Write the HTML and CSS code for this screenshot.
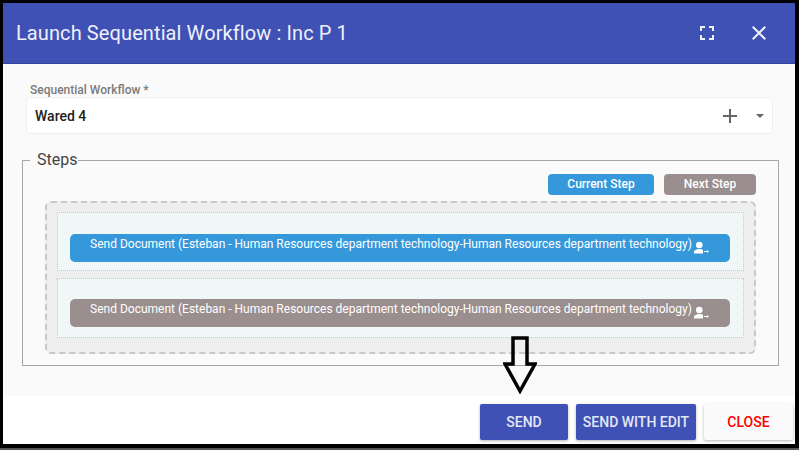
FILE: index.html
```html
<!DOCTYPE html>
<html lang="en">
<head>
    <meta charset="UTF-8">
    <meta name="viewport" content="width=device-width, initial-scale=1.0">
    <title>Launch Sequential Workflow</title>
    <link rel="stylesheet" href="styles.css">
</head>
<body>
    <div class="dialog">
        <header class="dialog-header">
            <h1>Launch Sequential Workflow : Inc P 1</h1>
            <div class="header-icons">
                <svg class="icon-expand" width="24" height="24" viewBox="0 0 24 24"><path d="M7 14H5v5h5v-2H7v-3zm-2-4h2V7h3V5H5v5zm12 7h-3v2h5v-5h-2v3zM14 5v2h3v3h2V5h-5z"/></svg>
                <svg class="icon-close" width="24" height="24" viewBox="0 0 24 24"><path d="M19 6.41 17.59 5 12 10.59 6.41 5 5 6.41 10.59 12 5 17.59 6.41 19 12 13.41 17.59 19 19 17.59 13.41 12z"/></svg>
            </div>
        </header>
        <div class="dialog-body">
            <label class="field-label">Sequential Workflow *</label>
            <div class="select-box">
                <span class="select-value">Wared 4</span>
                <svg class="icon-plus" width="24" height="24" viewBox="0 0 24 24"><path d="M19 13h-6v6h-2v-6H5v-2h6V5h2v6h6v2z"/></svg>
                <span class="select-caret"></span>
            </div>
            <fieldset class="steps">
                <legend>Steps</legend>
                <div class="legend-row">
                    <span class="tag tag-current">Current Step</span>
                    <span class="tag tag-next">Next Step</span>
                </div>
                <div class="step-list">
                    <div class="step-slot">
                        <div class="step-bar step-current">
                            <span>Send Document (Esteban - Human Resources department technology-Human Resources department technology)</span>
                            <svg class="icon-user" width="16" height="16" viewBox="0 0 16 16"><circle cx="5.3" cy="6" r="3.300"/><path d="M0 14.500V13c0-2 3-3 5.300-3 1.400 0 2.700.3 3.700.8v3.700z"/><path d="M10 12.100h3V11l2 1.500-2 1.500v-1.100h-3z"/></svg>
                        </div>
                    </div>
                    <div class="step-slot">
                        <div class="step-bar step-next">
                            <span>Send Document (Esteban - Human Resources department technology-Human Resources department technology)</span>
                            <svg class="icon-user" width="16" height="16" viewBox="0 0 16 16"><circle cx="5.3" cy="6" r="3.300"/><path d="M0 14.500V13c0-2 3-3 5.300-3 1.400 0 2.700.3 3.700.8v3.700z"/><path d="M10 12.100h3V11l2 1.500-2 1.500v-1.100h-3z"/></svg>
                        </div>
                    </div>
                </div>
            </fieldset>
        </div>
        <footer class="dialog-footer">
            <button class="btn btn-primary btn-send">SEND</button>
            <button class="btn btn-primary">SEND WITH EDIT</button>
            <button class="btn btn-close">CLOSE</button>
        </footer>
        <svg class="arrow-note" width="34" height="58" viewBox="0 0 34 58"><path d="M10 2h14v26h8L17 55 2 28h8z" fill="none" stroke="#000" stroke-width="3.500" stroke-linejoin="miter"/></svg>
    </div>
    <div class="taskbar"></div>
</body>
</html>
```

FILE: styles.css
```css
html, body {
    margin: 0;
    padding: 0;
}
body {
    width: 799px;
    height: 450px;
    overflow: hidden;
    background-color: #000;
    font-family: Roboto, "Liberation Sans", sans-serif;
}
.dialog {
    position: relative;
    display: flex;
    flex-direction: column;
    height: 441px;
    margin: 3px 4px 0 3px;
    background-color: #fff;
}
.dialog-header {
    display: flex;
    align-items: center;
    justify-content: space-between;
    flex: none;
    height: 60px;
    padding: 0 24px 0 13px;
    background-color: #3f51b5;
    border-bottom: 1px solid #36459c;
    color: #eef0fa;
}
.dialog-header h1 {
    margin: 0;
    font-size: 20px;
    font-weight: 400;
    letter-spacing: 0.1px;
}
.header-icons {
    display: flex;
    align-items: center;
    gap: 28px;
}
.header-icons svg {
    display: block;
    fill: #eef0fa;
}
.dialog-body {
    flex: none;
    height: 332px;
    box-sizing: border-box;
    margin-left: 2px;
    padding: 19px 17px 0 17px;
    background-color: #fafafa;
}
.field-label {
    display: block;
    margin-left: 8px;
    font-size: 12px;
    line-height: 14px;
    font-weight: 500;
    color: #7a7a7a;
}
.select-box {
    display: flex;
    align-items: center;
    box-sizing: border-box;
    width: 747px;
    height: 37px;
    margin: 0 0 0 4px;
    padding: 0 8px;
    background-color: #fff;
    border: 1px solid #efefef;
    border-radius: 4px;
}
.select-value {
    flex: 1;
    font-size: 14px;
    font-weight: 500;
    color: #212121;
}
.icon-plus {
    fill: #666;
    margin-right: 8px;
}
.select-caret {
    width: 0;
    height: 0;
    margin: 1px 0 0 6px;
    border-left: 4px solid transparent;
    border-right: 4px solid transparent;
    border-top: 4px solid #666;
}
.steps {
    box-sizing: border-box;
    width: 757px;
    height: 215px;
    margin: 17px 0 0 0;
    padding: 5px 22px 0 22px;
    border: 1px solid #a6a6a6;
    border-radius: 0;
}
.steps legend {
    margin-left: -15px;
    padding: 0 1px 0 7px;
    font-size: 16px;
    line-height: 18px;
    font-weight: 400;
    color: #444;
}
.legend-row {
    display: flex;
    justify-content: flex-end;
    gap: 10px;
    height: 21px;
}
.tag {
    display: block;
    box-sizing: border-box;
    height: 21px;
    border-radius: 4px;
    font-size: 12px;
    line-height: 20px;
    font-weight: 500;
    color: #fff;
    text-align: center;
}
.tag-current {
    width: 106px;
    background-color: #3498db;
}
.tag-next {
    width: 92px;
    background-color: #9b8e8e;
}
.step-list {
    display: flex;
    flex-direction: column;
    gap: 7px;
    box-sizing: border-box;
    height: 153px;
    margin-top: 6px;
    padding: 9px 10px 0 10px;
    background-color: #eeeeee;
    border: 2px dashed #c9c9c9;
    border-radius: 6px;
}
.step-slot {
    display: flex;
    align-items: flex-end;
    box-sizing: border-box;
    height: 59px;
    padding: 0 13px 8px 12px;
    background-color: #f0f8f7;
    border: 1px dotted #c8c8c8;
}
.step-slot + .step-slot {
    height: 60px;
    padding-bottom: 10px;
}
.step-bar {
    display: flex;
    justify-content: center;
    gap: 2px;
    flex: 1;
    height: 28px;
    border-radius: 5px;
    font-size: 12px;
    font-weight: 400;
    line-height: 20px;
    color: #fff;
}
.step-current {
    background-color: #3498db;
}
.step-next {
    background-color: #9b8e8e;
}
.icon-user {
    flex: none;
    margin-top: 5px;
    fill: #fff;
}
.dialog-footer {
    display: flex;
    justify-content: flex-end;
    gap: 8px;
    flex: 1;
    padding: 8px 2px 4px 0;
    background-color: #fff;
}
.btn {
    box-sizing: border-box;
    height: 36px;
    padding: 0;
    border: none;
    border-radius: 2px;
    font-family: inherit;
    font-size: 14px;
    font-weight: 500;
    box-shadow: 0 1px 3px rgba(0, 0, 0, 0.3);
}
.btn-primary {
    width: 120px;
    margin-right: 0;
    background-color: #3f51b5;
    color: #e4e7f6;
}
.btn-send {
    width: 88px;
}
.btn-close {
    width: 89px;
    margin-left: 0;
    background-color: #fafafa;
    color: #f00;
}
.arrow-note {
    position: absolute;
    left: 500px;
    top: 333px;
}
.taskbar {
    height: 2px;
    margin-top: 4px;
    background-color: #555;
}
```
